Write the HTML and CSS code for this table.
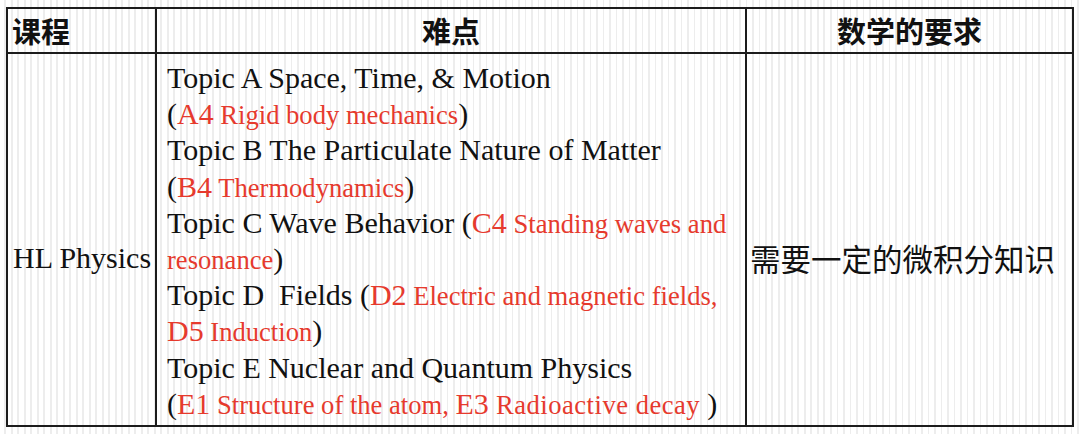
FILE: index.html
```html
<!DOCTYPE html>
<html lang="en">
<head>
<meta charset="utf-8">
<title>HL Physics</title>
<link rel="stylesheet" href="styles.css">
</head>
<body>
<table class="grid">
  <colgroup>
    <col class="c1"><col class="c2"><col class="c3">
  </colgroup>
  <thead>
    <tr class="head">
      <th class="h-left" lang="zh">课程</th>
      <th lang="zh">难点</th>
      <th lang="zh">数学的要求</th>
    </tr>
  </thead>
  <tbody>
    <tr class="body">
      <td class="course">HL Physics</td>
      <td class="topics">Topic A Space, Time, &amp; Motion<br>(<span class="code">A4</span><span class="desc"> Rigid body mechanics</span>)<br>Topic B The Particulate Nature of Matter<br>(<span class="code">B4</span><span class="desc"> Thermodynamics</span>)<br>Topic C Wave Behavior (<span class="code">C4</span><span class="desc"> Standing waves and<br>resonance</span>)<br>Topic D  Fields (<span class="code">D2</span><span class="desc"> Electric and magnetic fields,</span><br><span class="code">D5</span><span class="desc"> Induction</span>)<br>Topic E Nuclear and Quantum Physics<br>(<span class="code">E1</span><span class="desc"> Structure of the atom, </span><span class="code">E3</span><span class="desc wide"> Radioactive decay </span>)</td>
      <td class="math" lang="zh">需要一定的微积分知识</td>
    </tr>
  </tbody>
</table>
</body>
</html>
```
FILE: styles.css
```css
html, body {
  margin: 0;
  padding: 0;
}
body {
  width: 1080px;
  height: 434px;
  overflow: hidden;
  background: repeating-linear-gradient(90deg, #ffffff 0, #ffffff 4.5px, #ededed 4.5px, #ededed 6.5px);
  font-family: "Liberation Serif", "Times New Roman", serif;
  font-variant-ligatures: none;
  color: #111;
}
.grid {
  border-collapse: collapse;
  table-layout: fixed;
  width: 1066px;
  margin: 7px 0 0 6px;
}
.c1 { width: 149px; }
.c2 { width: 590px; }
.c3 { width: 327px; }
.grid th, .grid td {
  border: 2px solid #1c1c1c;
  padding: 0;
}
.head th {
  height: 43px;
  font-family: "Noto Sans CJK SC", sans-serif;
  font-weight: 700;
  font-size: 29px;
  line-height: 43px;
  text-align: center;
  color: #111;
}
.head th.h-left {
  text-align: left;
  padding-left: 4px;
}
.course {
  vertical-align: middle;
  padding: 36px 0 0 5px !important;
  font-size: 30px;
  line-height: 36px;
  white-space: nowrap;
}
.topics {
  vertical-align: top;
  padding: 6px 0 3px 10px !important;
  font-family: "Liberation Serif", "Times New Roman", serif;
  font-size: 30px;
  line-height: 36.2px;
  white-space: pre;
}
.code {
  color: #e63a2d;
  font-family: "Liberation Serif", "Times New Roman", serif;
}
.desc {
  color: #e63a2d;
  font-family: "Liberation Serif", "Times New Roman", serif;
  font-size: 26.6px;
  line-height: 26px;
}
.desc.wide {
  letter-spacing: 0.5px;
}
.math {
  vertical-align: middle;
  padding: 36px 0 0 3px !important;
  font-family: "Noto Sans CJK SC", sans-serif;
  font-size: 30.5px;
  line-height: 40px;
  white-space: nowrap;
  color: #111;
}
```
